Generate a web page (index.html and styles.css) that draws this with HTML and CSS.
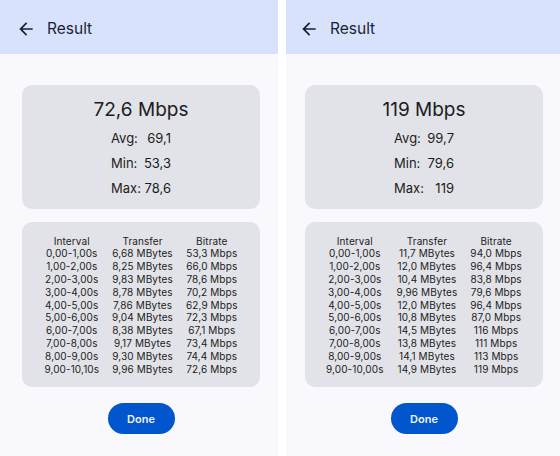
FILE: index.html
```html
<!DOCTYPE html>
<html>
<head>
<meta charset="utf-8">
<link rel="stylesheet" href="styles.css">
</head>
<body>
<div class="screens">
  <section class="screen screen-left">
    <header class="topbar">
      <svg class="back" viewBox="0 0 24 24" width="20" height="20"><path d="M20 11H7.83l5.59-5.59L12 4l-8 8 8 8 1.41-1.41L7.83 13H20v-2z"/></svg>
      <span class="title">Result</span>
    </header>
    <main class="content">
      <div class="card summary">
        <div class="big">72,6 Mbps</div>
        <div class="stat"><span>Avg:</span><span>69,1</span></div>
        <div class="stat"><span>Min:</span><span>53,3</span></div>
        <div class="stat"><span>Max:</span><span>78,6</span></div>
      </div>
      <div class="card details">
        <div class="table">
          <span>Interval</span><span>Transfer</span><span>Bitrate</span>
          <span>0,00-1,00s</span><span>6,68 MBytes</span><span>53,3 Mbps</span>
          <span>1,00-2,00s</span><span>8,25 MBytes</span><span>66,0 Mbps</span>
          <span>2,00-3,00s</span><span>9,83 MBytes</span><span>78,6 Mbps</span>
          <span>3,00-4,00s</span><span>8,78 MBytes</span><span>70,2 Mbps</span>
          <span>4,00-5,00s</span><span>7,86 MBytes</span><span>62,9 Mbps</span>
          <span>5,00-6,00s</span><span>9,04 MBytes</span><span>72,3 Mbps</span>
          <span>6,00-7,00s</span><span>8,38 MBytes</span><span>67,1 Mbps</span>
          <span>7,00-8,00s</span><span>9,17 MBytes</span><span>73,4 Mbps</span>
          <span>8,00-9,00s</span><span>9,30 MBytes</span><span>74,4 Mbps</span>
          <span>9,00-10,10s</span><span>9,96 MBytes</span><span>72,6 Mbps</span>
        </div>
      </div>
      <div class="actions"><button class="done">Done</button></div>
    </main>
  </section>
  <section class="screen screen-right">
    <header class="topbar">
      <svg class="back" viewBox="0 0 24 24" width="20" height="20"><path d="M20 11H7.83l5.59-5.59L12 4l-8 8 8 8 1.41-1.41L7.83 13H20v-2z"/></svg>
      <span class="title">Result</span>
    </header>
    <main class="content">
      <div class="card summary">
        <div class="big">119 Mbps</div>
        <div class="stat"><span>Avg:</span><span>99,7</span></div>
        <div class="stat"><span>Min:</span><span>79,6</span></div>
        <div class="stat"><span>Max:</span><span>119</span></div>
      </div>
      <div class="card details">
        <div class="table">
          <span>Interval</span><span>Transfer</span><span>Bitrate</span>
          <span>0,00-1,00s</span><span>11,7 MBytes</span><span>94,0 Mbps</span>
          <span>1,00-2,00s</span><span>12,0 MBytes</span><span>96,4 Mbps</span>
          <span>2,00-3,00s</span><span>10,4 MBytes</span><span>83,8 Mbps</span>
          <span>3,00-4,00s</span><span>9,96 MBytes</span><span>79,6 Mbps</span>
          <span>4,00-5,00s</span><span>12,0 MBytes</span><span>96,4 Mbps</span>
          <span>5,00-6,00s</span><span>10,8 MBytes</span><span>87,0 Mbps</span>
          <span>6,00-7,00s</span><span>14,5 MBytes</span><span>116 Mbps</span>
          <span>7,00-8,00s</span><span>13,8 MBytes</span><span>111 Mbps</span>
          <span>8,00-9,00s</span><span>14,1 MBytes</span><span>113 Mbps</span>
          <span>9,00-10,00s</span><span>14,9 MBytes</span><span>119 Mbps</span>
        </div>
      </div>
      <div class="actions"><button class="done">Done</button></div>
    </main>
  </section>
</div>
</body>
</html>
```
FILE: styles.css
```css
html, body {
  margin: 0;
  padding: 0;
  background: #ffffff;
}
body {
  font-family: Inter, "Noto Sans", sans-serif;
  color: #1b1c22;
}
.screens {
  display: flex;
  gap: 8px;
  height: 456px;
}
.screen {
  background: #f8f8fd;
  display: flex;
  flex-direction: column;
}
.screen-left { width: 278px; }
.screen-right { width: 274px; }
.topbar {
  height: 54px;
  padding-top: 3px;
  background: #d9e2fc;
  display: flex;
  align-items: center;
  gap: 11px;
  box-sizing: border-box;
}
.screen-left .topbar { padding-left: 16px; }
.screen-right .topbar { padding-left: 13px; }
.back {
  fill: #1b1f33;
  flex: none;
}
.title {
  font-size: 15.5px;
  color: #1b1f33;
  line-height: 20px;
}
.content {
  display: flex;
  flex-direction: column;
  padding-top: 31px;
}
.screen-left .content { padding-left: 22px; }
.screen-right .content { padding-left: 19px; }
.card {
  width: 238px;
  background: #e2e3e8;
  border-radius: 10px;
  box-sizing: border-box;
}
.summary {
  height: 124px;
  padding-top: 11px;
  display: flex;
  flex-direction: column;
  align-items: center;
}
.big {
  font-size: 19px;
  line-height: 28px;
  margin-bottom: 1.5px;
}
.stat {
  width: 60px;
  display: flex;
  justify-content: space-between;
  font-size: 13px;
  line-height: 25px;
}
.details {
  margin-top: 13px;
  height: 165px;
  padding-top: 12.6px;
  display: flex;
  justify-content: center;
}
.table {
  display: grid;
  grid-template-columns: auto auto auto;
  column-gap: 13px;
  font-size: 10px;
  line-height: 12.8px;
  letter-spacing: 0.1px;
  text-align: center;
  align-self: flex-start;
}
.actions {
  width: 238px;
  display: flex;
  justify-content: center;
  margin-top: 16px;
}
.done {
  width: 67px;
  height: 31px;
  border: none;
  border-radius: 16px;
  background: #0256cd;
  color: #eef2ff;
  font-family: Inter, "Noto Sans", sans-serif;
  font-size: 11px;
  font-weight: 600;
  padding: 0;
}
```
